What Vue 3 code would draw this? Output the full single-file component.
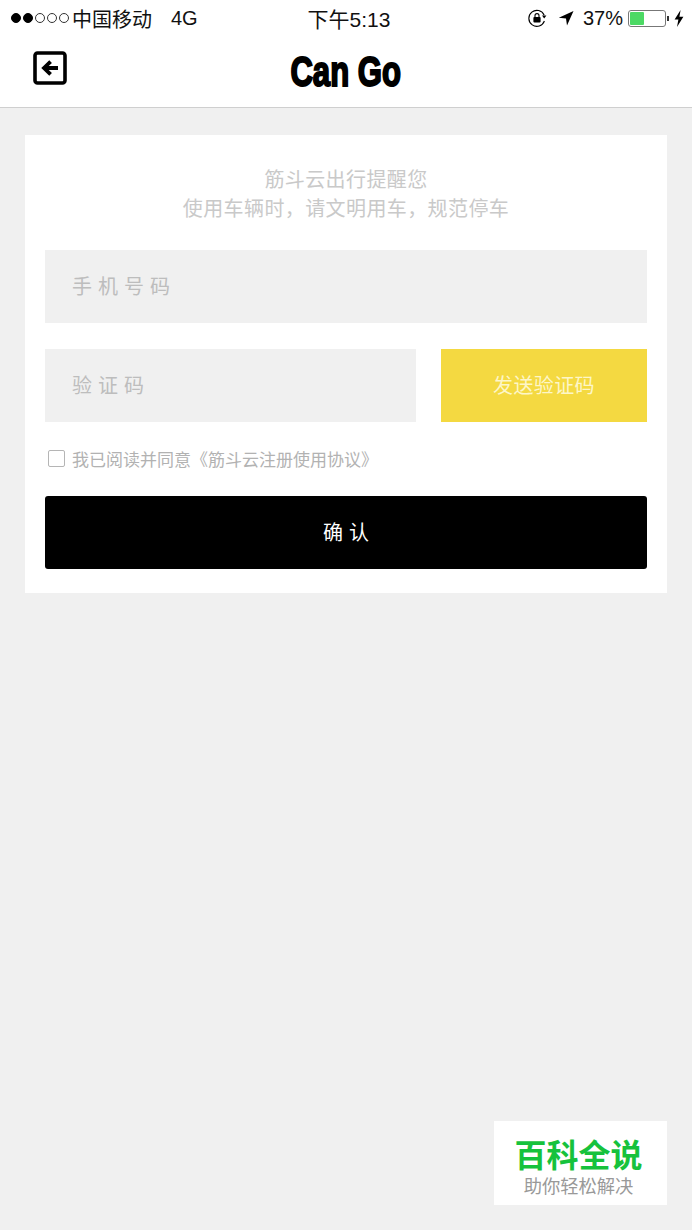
<script setup>
const dots = [true, true, false, false, false]
</script>

<template>
  <div class="page">
    <div class="status-bar">
      <div class="status-left">
        <span class="dots">
          <i v-for="(on, i) in dots" :key="i" class="dot" :class="{ on }"></i>
        </span>
        <span class="carrier">中国移动</span>
        <span class="net">4G</span>
      </div>
      <div class="clock">下午5:13</div>
      <div class="status-right">
        <svg class="lock" width="20" height="20" viewBox="0 0 20 20">
          <path d="M17.2 7.2A8 8 0 1 0 17.4 13" fill="none" stroke="#000" stroke-width="1.1" />
          <path d="M15 7.6h4.4L17.2 10.6z" fill="#000" />
          <rect x="6.4" y="9" width="7.2" height="5.4" rx="1" fill="#000" />
          <path d="M8 9.4V7.6a2 2 0 0 1 4 0v1.8" fill="none" stroke="#000" stroke-width="1.1" />
        </svg>
        <svg class="arrow" width="16" height="16" viewBox="0 0 16 16">
          <path d="M15.5 1 0.8 7.8 8 8.6 9 15.5z" fill="#000" />
        </svg>
        <span class="percent">37%</span>
        <span class="battery"><span class="level" style="width: 41%"></span></span>
        <span class="nub"></span>
        <svg class="bolt" width="10" height="17" viewBox="0 0 10 17">
          <path d="M6.6 0 0.6 9.6H4.4L3 17 9.4 6.8H5.4z" fill="#000" />
        </svg>
      </div>
    </div>

    <header class="nav">
      <svg class="back" width="35" height="35" viewBox="0 0 35 35">
        <rect x="2" y="2" width="30" height="30" rx="2.5" fill="#fff" stroke="#000" stroke-width="3.6" />
        <path d="M25 17H12M17.6 10.6 11 17l6.6 6.4" fill="none" stroke="#000" stroke-width="3.8" />
      </svg>
      <div class="title">Can Go</div>
    </header>

    <main class="card">
      <div class="tip">
        <p>筋斗云出行提醒您</p>
        <p>使用车辆时，请文明用车，规范停车</p>
      </div>
      <input class="field" type="text" placeholder="手机号码" />
      <div class="code-row">
        <input class="field code" type="text" placeholder="验证码" />
        <button class="send" type="button">发送验证码</button>
      </div>
      <label class="agree">
        <span class="box"></span>
        <span>我已阅读并同意《筋斗云注册使用协议》</span>
      </label>
      <button class="confirm" type="button">确认</button>
    </main>

    <div class="mark">
      <div class="mark-name">百科全说</div>
      <div class="mark-sub">助你轻松解决</div>
    </div>
  </div>
</template>

<style>
body {
  margin: 0;
}
</style>

<style scoped>
.page {
  position: relative;
  height: 1230px;
  background: #f0f0f0;
  font-family: "Liberation Sans", "Noto Sans CJK SC", sans-serif;
  overflow: hidden;
}

.status-bar {
  display: grid;
  grid-template-columns: 1fr auto 1fr;
  align-items: center;
  height: 36px;
  padding: 0 8px 0 11px;
  background: #fff;
  color: #111;
  font-size: 20px;
}

.status-left,
.status-right {
  display: flex;
  align-items: center;
}

.status-right {
  justify-content: flex-end;
}

.dots {
  display: flex;
  gap: 2px;
  margin-right: 3px;
}

.dot {
  box-sizing: border-box;
  width: 10px;
  height: 10px;
  border: 1px solid #333;
  border-radius: 50%;
}

.dot.on {
  background: #000;
  border-color: #000;
}

.net {
  margin-left: 19px;
}

.clock {
  margin-left: 3px;
  font-size: 21px;
}

.arrow {
  margin-left: 11px;
}

.percent {
  margin-left: 9px;
}

.battery {
  box-sizing: border-box;
  display: block;
  width: 38px;
  height: 17px;
  margin-left: 5px;
  padding: 1px;
  border: 1px solid #777;
  border-radius: 3px;
}

.level {
  display: block;
  height: 100%;
  background: #4cd964;
  border-radius: 1px;
}

.nub {
  width: 2px;
  height: 5px;
  margin-left: 1px;
  background: #333;
}

.bolt {
  margin-left: 5px;
}

.nav {
  display: flex;
  align-items: center;
  justify-content: center;
  position: relative;
  height: 71px;
  background: #fff;
  border-bottom: 1px solid #cfcfcf;
}

.back {
  position: absolute;
  left: 33px;
  top: 15px;
}

.title {
  font-size: 42px;
  line-height: 69px;
  font-weight: 700;
  color: #000;
  white-space: nowrap;
  transform: scaleX(0.74);
  -webkit-text-stroke: 2px #000;
}

.card {
  box-sizing: border-box;
  height: 458px;
  margin: 27px 25px 0;
  padding: 31px 20px 0;
  background: #fff;
}

.tip {
  margin-bottom: 26px;
  text-align: center;
  font-size: 20px;
  line-height: 29px;
  letter-spacing: 0.4px;
  color: #c9c9c9;
}

.tip p {
  margin: 0;
}

.field {
  box-sizing: border-box;
  display: block;
  width: 100%;
  height: 73px;
  padding: 2px 27px 0;
  border: 0;
  border-radius: 0;
  outline: 0;
  background: #f0f0f0;
  font-family: inherit;
  font-size: 20px;
  letter-spacing: 6px;
}

.field::placeholder {
  color: #bdbdbd;
  opacity: 1;
}

.code-row {
  display: flex;
  gap: 25px;
  margin-top: 26px;
}

.field.code {
  flex: 1;
  width: auto;
  min-width: 0;
}

.send {
  flex: none;
  width: 206px;
  height: 73px;
  padding: 0 0 2px;
  border: 0;
  background: #f4d941;
  color: #fdf6c8;
  font-family: inherit;
  font-size: 20px;
  letter-spacing: 0.4px;
}

.agree {
  box-sizing: border-box;
  display: flex;
  align-items: center;
  gap: 7px;
  height: 74px;
  padding: 0 0 2px 3px;
  font-size: 17px;
  color: #b2b2b2;
}

.box {
  box-sizing: border-box;
  width: 17px;
  height: 17px;
  border: 1.5px solid #b5b5b5;
  border-radius: 2px;
}

.confirm {
  display: block;
  width: 100%;
  height: 73px;
  padding: 0 0 2px 6px;
  border: 0;
  border-radius: 3px;
  background: #000;
  color: #fff;
  font-family: inherit;
  font-size: 20px;
  letter-spacing: 6px;
}

.mark {
  position: absolute;
  left: 494px;
  top: 1121px;
  box-sizing: border-box;
  width: 173px;
  height: 84px;
  padding-right: 4px;
  background: #fff;
  text-align: center;
}

.mark-name {
  margin-top: 15px;
  font-size: 32px;
  line-height: 40px;
  font-weight: 700;
  color: #16c23c;
}

.mark-sub {
  font-size: 18.3px;
  line-height: 22px;
  color: #999;
}
</style>
